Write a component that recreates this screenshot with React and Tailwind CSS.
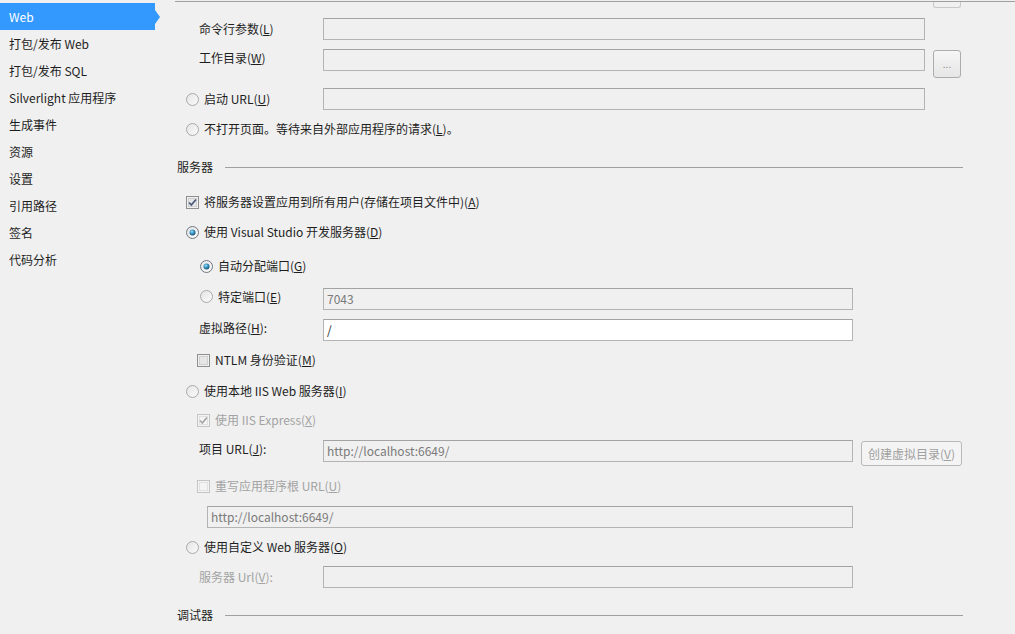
import React from 'react';

const font = { fontFamily: '"Microsoft YaHei", "Noto Sans CJK SC", "Noto Sans", sans-serif' };

const navItems = ['Web', '打包/发布 Web', '打包/发布 SQL', 'Silverlight 应用程序', '生成事件', '资源', '设置', '引用路径', '签名', '代码分析'];

function Radio({ checked }) {
  return (
    <svg width="13" height="13" viewBox="0 0 13 13" className="shrink-0">
      <defs>
        <linearGradient id="rbg" x1="0" y1="0" x2="1" y2="1">
          <stop offset="0" stopColor="#e4e4e4" />
          <stop offset="1" stopColor="#fbfbfb" />
        </linearGradient>
        <radialGradient id="rdot" cx="0.4" cy="0.35" r="0.7">
          <stop offset="0" stopColor="#a8e0f5" />
          <stop offset="0.5" stopColor="#2f8fbf" />
          <stop offset="1" stopColor="#1a4f6e" />
        </radialGradient>
      </defs>
      <circle cx="6.5" cy="6.5" r="6" fill="url(#rbg)" stroke={checked ? '#6f7780' : '#a9a9a9'} />
      {checked && <circle cx="6.5" cy="6.5" r="3" fill="url(#rdot)" />}
    </svg>
  );
}

function Check({ checked, disabled }) {
  return (
    <svg width="13" height="13" viewBox="0 0 13 13" className="shrink-0">
      <rect x="0.5" y="0.5" width="12" height="12" fill={disabled ? '#f4f4f4' : '#f0f0f0'} stroke={disabled ? '#c4c4c4' : '#8e8f8f'} />
      <rect x="2.5" y="2.5" width="8" height="8" fill={disabled ? '#f4f4f4' : '#e6e6e6'} stroke={disabled ? '#e0e0e0' : '#d0d0d0'} />
      {checked && (
        <path d="M3 6.5 L5.3 9 L10 3.5" fill="none" stroke={disabled ? '#a8a8a8' : '#4a5a7a'} strokeWidth="1.8" />
      )}
    </svg>
  );
}

function Field({ w, value, white, gray }) {
  return (
    <div
      className={`h-[22px] border border-[#b4b4b4] border-t-[#a3a3a3] flex items-center px-[3px] text-[12px] shrink-0 ${white ? 'bg-white' : 'bg-[#f0f0f0]'} ${gray ? 'text-[#7a7a7a]' : 'text-[#1e1e1e]'} ${w}`}
    >
      {value}
    </div>
  );
}

function Opt({ radio, checked, disabled, indent, children }) {
  return (
    <div className={`flex items-center h-[20px] gap-[5px] ${indent}`}>
      {radio ? <Radio checked={checked} /> : <Check checked={checked} disabled={disabled} />}
      <span className={disabled ? 'text-[#a3a3a3]' : 'text-[#1e1e1e]'}>{children}</span>
    </div>
  );
}

function Section({ title, mt }) {
  return (
    <div className={`flex items-center h-[20px] pl-[2px] ${mt}`}>
      <span className="text-[#1e1e1e]">{title}</span>
      <div className="ml-[12px] w-[738px] h-px bg-[#a0a0a0]" />
    </div>
  );
}

export default function App() {
  return (
    <div className="w-[1015px] h-[634px] bg-[#f0f0f0] flex text-[12px] overflow-hidden" style={font}>
      <div className="w-[160px] shrink-0 pt-[3px]">
        {navItems.map((item, i) =>
          i === 0 ? (
            <div key={item} className="flex items-center h-[27px]">
              <div className="w-[155px] h-full bg-[#3399ff] text-white flex items-center pl-[9px]">{item}</div>
              <div className="w-0 h-0 border-y-[7px] border-y-transparent border-l-[5px] border-l-[#3399ff]" />
            </div>
          ) : (
            <div key={item} className="h-[27px] flex items-center pl-[9px] text-[#1e1e1e]">{item}</div>
          )
        )}
      </div>

      <div className="flex-1 ml-[15px] flex flex-col">
        <div className="h-px mt-px bg-[#a0a0a0]" />
        <div className="h-[7px] flex">
          <div className="ml-[758px] w-[28px] h-[6px] border-x border-b border-[#c8c8c8] rounded-b-[3px]" />
        </div>

        <div className="flex items-center h-[22px] mt-[9px]">
          <span className="w-[124px] ml-[24px] text-[#1e1e1e]">命令行参数(<u>L</u>)</span>
          <Field w="w-[602px]" />
        </div>

        <div className="flex items-start h-[22px] mt-[9px]">
          <span className="w-[124px] ml-[24px] h-[18px] flex items-center text-[#1e1e1e]">工作目录(<u>W</u>)</span>
          <Field w="w-[602px]" />
          <div className="ml-[8px] mt-px w-[28px] h-[28px] shrink-0 rounded-[3px] border border-[#acacac] bg-gradient-to-b from-[#f6f6f6] to-[#e6e6e6] flex items-center justify-center text-[10px] text-[#8a8a8a] leading-none">
            ...
          </div>
        </div>

        <div className="flex items-center h-[22px] mt-[17px]">
          <div className="w-[137px] ml-[11px]">
            <Opt radio>启动 URL(<u>U</u>)</Opt>
          </div>
          <Field w="w-[602px]" />
        </div>

        <div className="flex items-center h-[22px] mt-[8px] ml-[11px]">
          <Opt radio>不打开页面。等待来自外部应用程序的请求(<u>L</u>)。</Opt>
        </div>

        <Section title="服务器" mt="mt-[17px]" />

        <div className="mt-[15px]">
          <Opt checked indent="ml-[11px]">将服务器设置应用到所有用户(存储在项目文件中)(<u>A</u>)</Opt>
        </div>
        <div className="mt-[10px]">
          <Opt radio checked indent="ml-[11px]">使用 Visual Studio 开发服务器(<u>D</u>)</Opt>
        </div>
        <div className="mt-[14px]">
          <Opt radio checked indent="ml-[25px]">自动分配端口(<u>G</u>)</Opt>
        </div>

        <div className="flex items-center h-[22px] mt-[12px]">
          <div className="w-[123px] ml-[25px] mb-[5px]">
            <Opt radio>特定端口(<u>E</u>)</Opt>
          </div>
          <Field w="w-[530px]" value="7043" gray />
        </div>

        <div className="flex items-center h-[22px] mt-[9px]">
          <span className="w-[124px] ml-[24px] mb-[4px] text-[#1e1e1e]">虚拟路径(<u>H</u>):</span>
          <Field w="w-[530px]" value="/" white />
        </div>

        <div className="mt-[9px]">
          <Opt indent="ml-[22px]">NTLM 身份验证(<u>M</u>)</Opt>
        </div>
        <div className="mt-[11px]">
          <Opt radio indent="ml-[11px]">使用本地 IIS Web 服务器(<u>I</u>)</Opt>
        </div>
        <div className="mt-[9px]">
          <Opt checked disabled indent="ml-[22px]">使用 IIS Express(<u>X</u>)</Opt>
        </div>

        <div className="flex items-start h-[22px] mt-[10px]">
          <span className="w-[124px] ml-[24px] h-[18px] flex items-center text-[#1e1e1e]">项目 URL(<u>J</u>):</span>
          <Field w="w-[530px]" value="http://localhost:6649/" gray />
          <div className="ml-[8px] mt-px w-[101px] h-[25px] shrink-0 rounded-[3px] border border-[#b8b8b8] bg-[#f4f4f4] flex items-center justify-center text-[#a0a0a0]">
            创建虚拟目录(<u>V</u>)
          </div>
        </div>

        <div className="mt-[14px]">
          <Opt disabled indent="ml-[22px]">重写应用程序根 URL(<u>U</u>)</Opt>
        </div>

        <div className="flex mt-[10px] ml-[32px]">
          <Field w="w-[646px]" value="http://localhost:6649/" gray />
        </div>

        <div className="mt-[9px]">
          <Opt radio indent="ml-[11px]">使用自定义 Web 服务器(<u>O</u>)</Opt>
        </div>

        <div className="flex items-center h-[22px] mt-[9px]">
          <span className="w-[124px] ml-[24px] text-[#a3a3a3]">服务器 Url(<u>V</u>):</span>
          <Field w="w-[530px]" />
        </div>

        <Section title="调试器" mt="mt-[17px]" />
      </div>
    </div>
  );
}
